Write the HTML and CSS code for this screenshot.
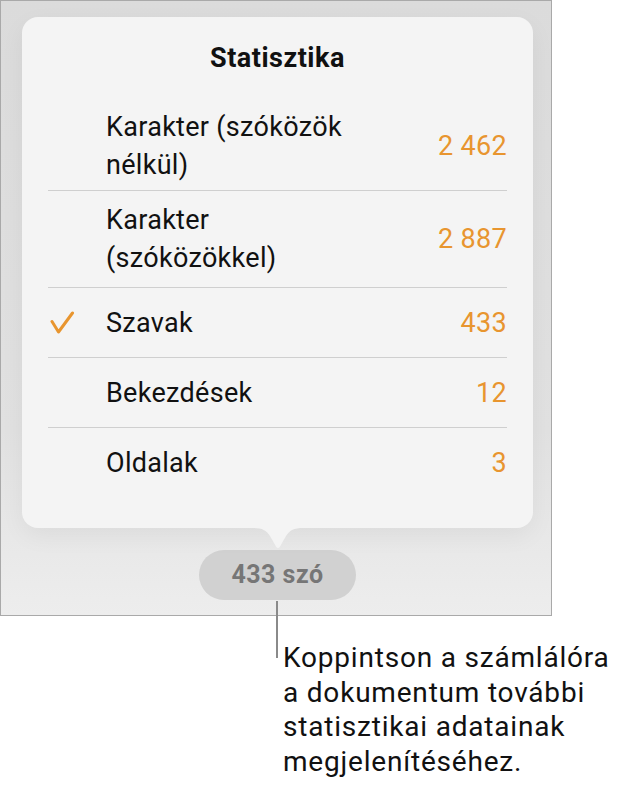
FILE: index.html
```html
<!DOCTYPE html>
<html lang="hu">
<head>
	<meta charset="UTF-8">
	<title>Statisztika</title>
	<link rel="stylesheet" href="styles.css">
</head>
<body>

	<div class="frame">
		<div class="popover">
			<h1 class="title">Statisztika</h1>
			<ul class="stats">
				<li class="row">
					<span class="check"></span>
					<span class="label">Karakter (szóközök<br>nélkül)</span>
					<span class="value">2 462</span>
				</li>
				<li class="row">
					<span class="check"></span>
					<span class="label">Karakter<br>(szóközökkel)</span>
					<span class="value">2 887</span>
				</li>
				<li class="row">
					<span class="check">
						<svg width="26" height="24" viewBox="0 0 26 24"><path d="M3 10.5 L9.5 21 L23.5 2" fill="none" stroke="#e8952f" stroke-width="3" stroke-linecap="round" stroke-linejoin="round"/></svg>
					</span>
					<span class="label">Szavak</span>
					<span class="value">433</span>
				</li>
				<li class="row">
					<span class="check"></span>
					<span class="label">Bekezdések</span>
					<span class="value">12</span>
				</li>
				<li class="row">
					<span class="check"></span>
					<span class="label">Oldalak</span>
					<span class="value">3</span>
				</li>
			</ul>
			<!-- a buborék nyila a számláló felé -->
			<svg class="arrow" width="50" height="21" viewBox="0 0 50 21"><path d="M0 0 C9 0 13 2 17 8 L23 18.5 Q25 21.5 27 18.5 L33 8 C37 2 41 0 50 0 Z" fill="#f4f4f4"/></svg>
		</div>
		<div class="counter">433 szó</div>
	</div>

	<div class="callout">
		<div class="leader"></div>
		<p class="note">Koppintson a számlálóra<br>a dokumentum további<br>statisztikai adatainak<br>megjelenítéséhez.</p>
	</div>

</body>
</html>
```

FILE: styles.css
```css
body {
	margin: 0;
	background-color: #fff;
	font-family: Roboto, "Liberation Sans", sans-serif;
	color: #111;
}

/*szürke keret, benne a buborék és a számláló*/
.frame {
	width: 552px;
	height: 616px;
	box-sizing: border-box;
	border: 1px solid #a9a9a9;
	padding: 16px 18px 0 21px;
	background: linear-gradient(#dbdbdb, #e1e1e1 70%, #ededed);
	display: flex;
	flex-direction: column;
}

.popover {
	position: relative;
	width: 511px;
	box-sizing: border-box;
	padding: 27px 26px 30px;
	background-color: #f4f4f4;
	border-radius: 16px;
	box-shadow: 0 8px 24px rgba(0, 0, 0, 0.05);
}

.title {
	margin: 0 0 22px;
	font-size: 27px;
	line-height: 28px;
	font-weight: bold;
	letter-spacing: 0.5px;
	text-align: center;
}

.stats {
	list-style: none;
	margin: 0;
	padding: 0;
}

.row {
	display: flex;
	align-items: center;
	min-height: 70px;
	box-sizing: border-box;
	padding: 10px 0;
	border-bottom: 1px solid #cfcfcf;
	font-size: 27px;
	line-height: 38px;
	letter-spacing: 0.3px;
}
.row:first-child {
	padding: 14px 0 6px;
}
.row:last-child {
	border-bottom: none;
}

.check {
	width: 58px;
	flex-shrink: 0;
	display: flex;
	align-items: center;
}
.check svg {
	display: block;
	margin-left: 1px;
}

.label {
	flex: 1;
}

.value {
	color: #e8952f;
}

.arrow {
	position: absolute;
	left: 231px;
	top: 100%;
	display: block;
}

.counter {
	align-self: center;
	margin-top: 22px;
	width: 157px;
	height: 50px;
	border-radius: 25px;
	background-color: #d1d1d1;
	color: #767676;
	font-size: 25px;
	font-weight: bold;
	letter-spacing: 0.5px;
	line-height: 50px;
	text-align: center;
}

/*magyarázó felirat a vonallal*/
.callout {
	position: relative;
	display: flex;
	align-items: flex-start;
	margin-top: -15px;
	padding-left: 276px;
}

.leader {
	width: 2px;
	height: 57px;
	background-color: #8a8a8a;
	flex-shrink: 0;
}

.note {
	margin: 40px 0 0 5px;
	font-size: 28px;
	line-height: 34.5px;
	letter-spacing: 0.8px;
}
```
